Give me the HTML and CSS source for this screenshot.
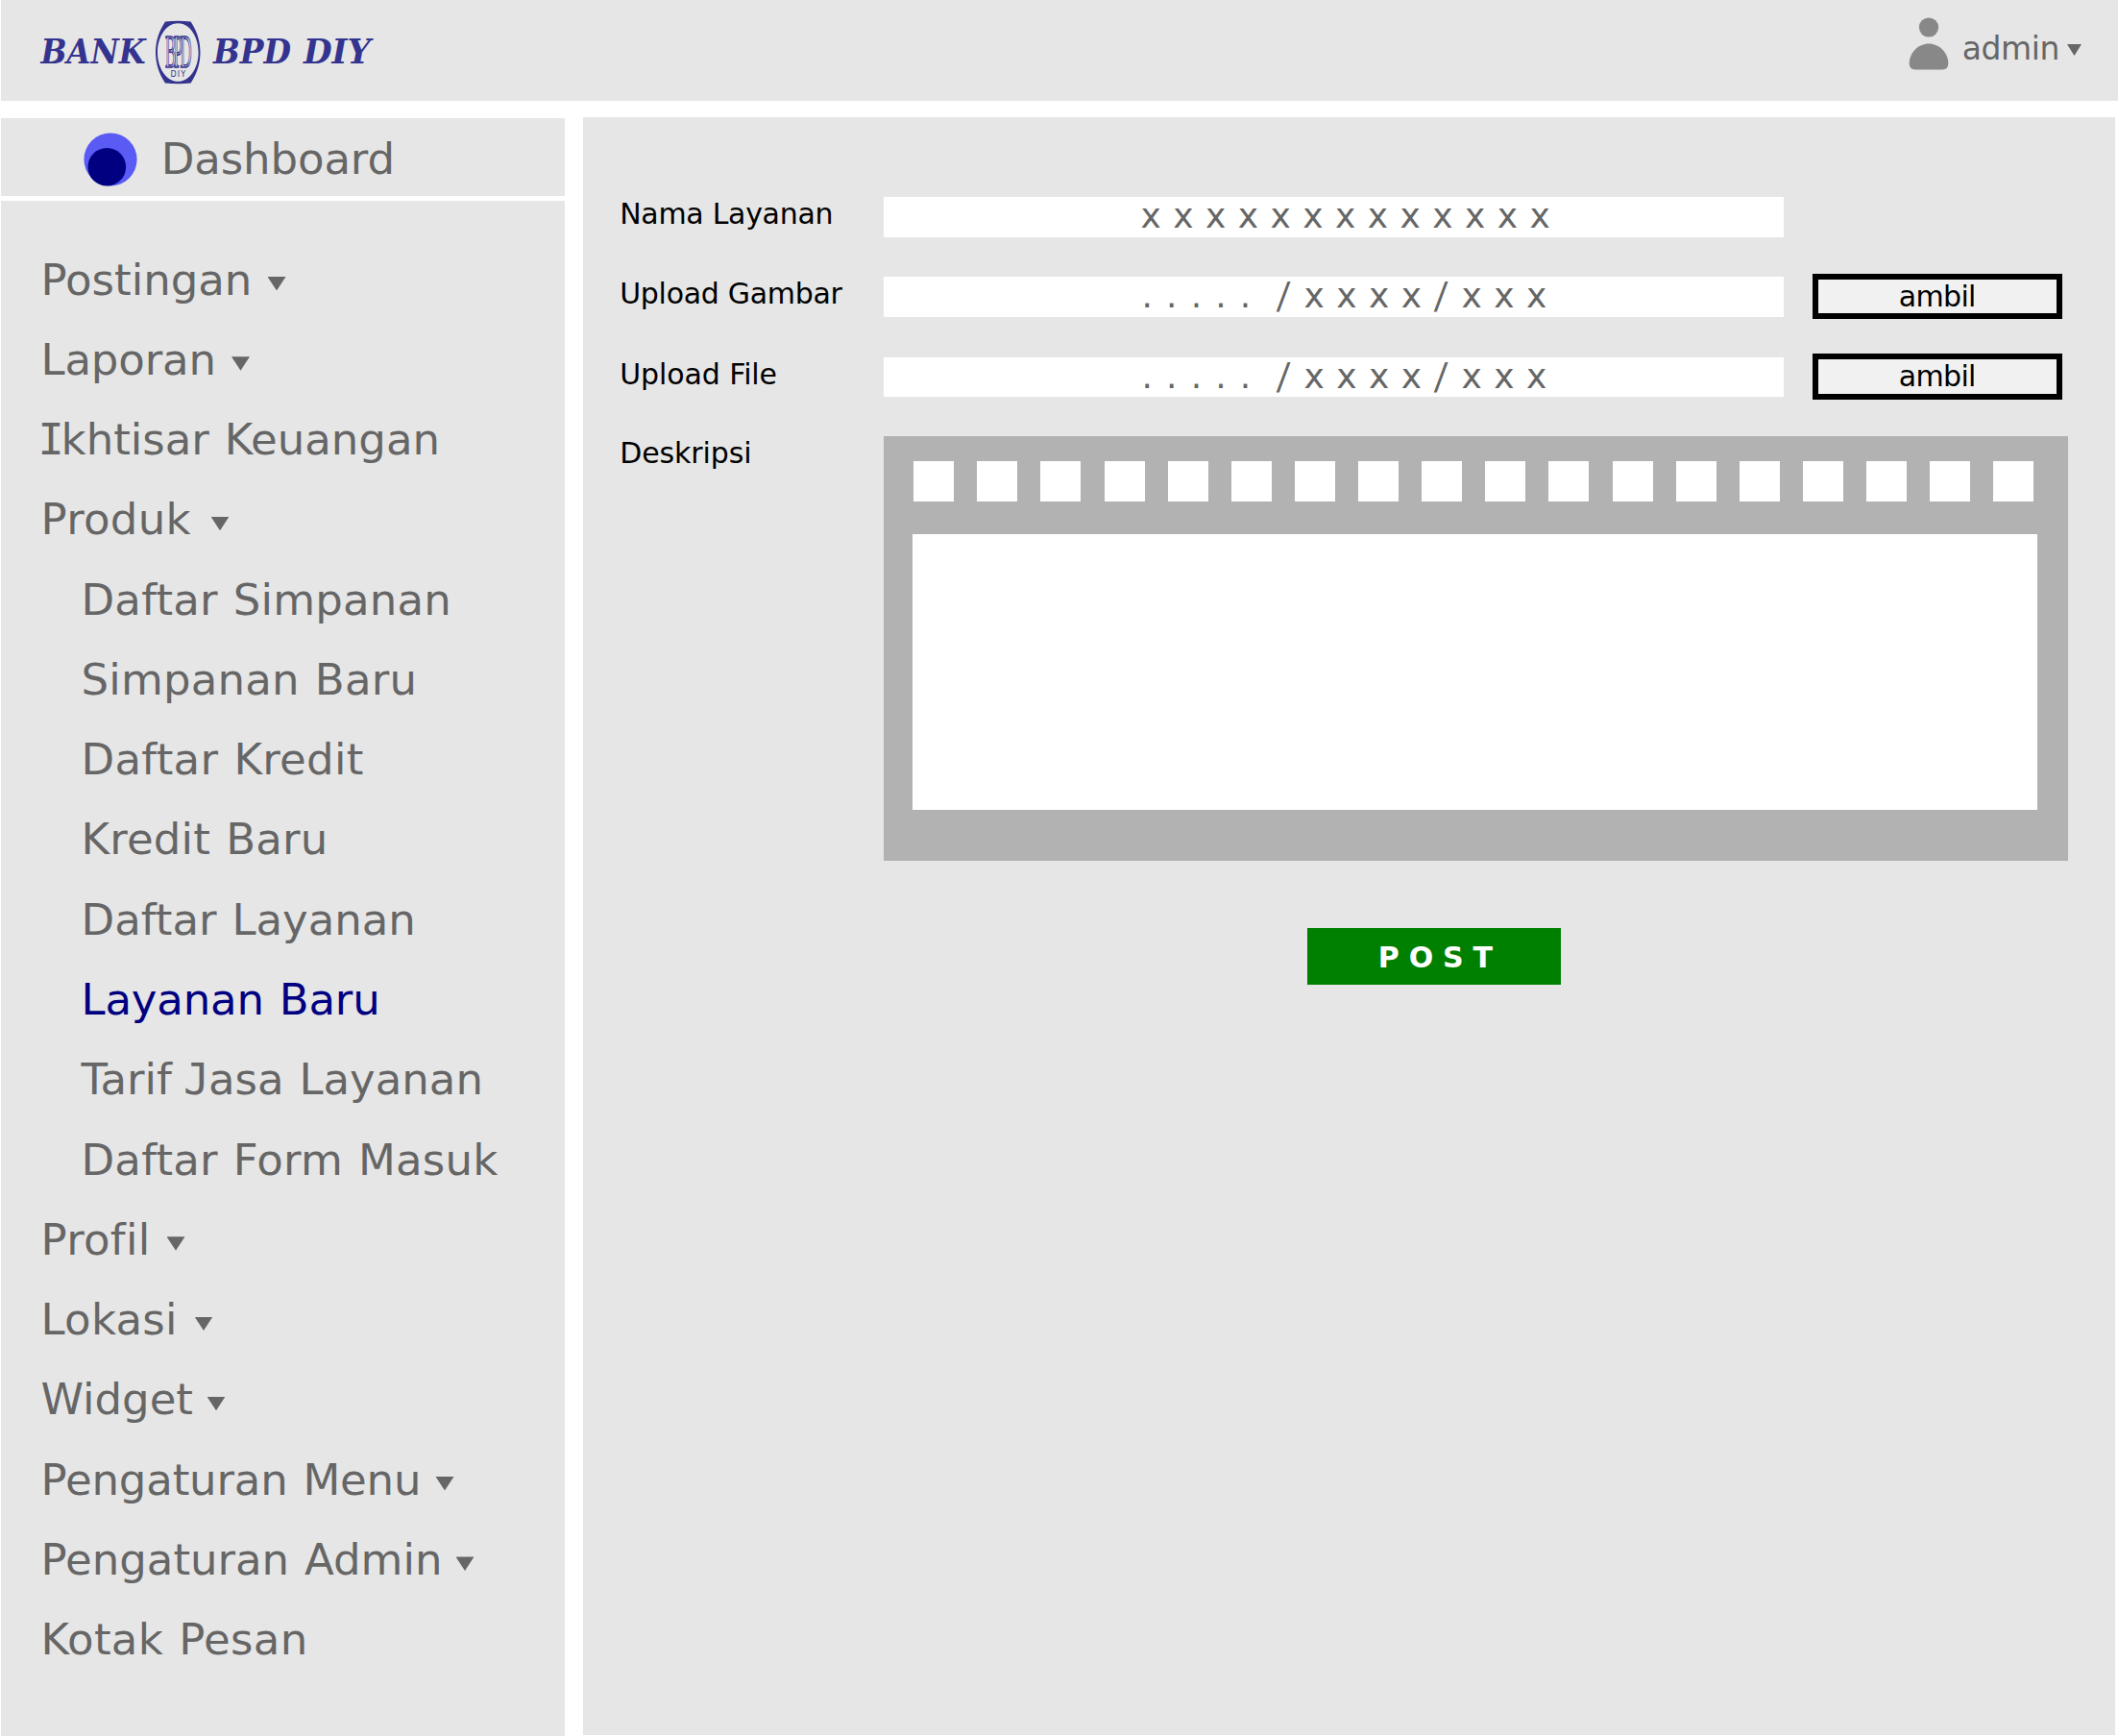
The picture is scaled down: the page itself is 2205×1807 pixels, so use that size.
FILE: index.html
```html
<!DOCTYPE html>
<html lang="id">
<head>
<meta charset="utf-8">
<title>Layanan Baru - Bank BPD DIY</title>
<link rel="stylesheet" href="styles.css">
</head>
<body>
<header class="topbar">
  <svg class="logo" width="350" height="70" viewBox="40 20 350 70" role="img" aria-label="Bank BPD DIY">
    <g class="logo-word">
      <text x="42.500" y="65.500" textLength="109" lengthAdjust="spacingAndGlyphs">BANK</text>
      <text x="222" y="65.500" textLength="81" lengthAdjust="spacingAndGlyphs">BPD</text>
      <text x="316" y="65.500" textLength="70" lengthAdjust="spacingAndGlyphs">DIY</text>
    </g>
    <path class="logo-ring" fill-rule="evenodd" d="M172 22.500Q185.300 21 198.600 22.500C205 32 208.500 43 208.500 54.500S205 77 198.600 86.500Q185.300 88 172 86.500C165.500 77 162 66 162 54.500S165.500 32 172 22.500ZM185.300 24.200C173.500 24.200 164 37.500 164 54.500S173.500 84.800 185.300 84.800S206.600 71.500 206.600 54.500S197.100 24.200 185.300 24.200Z"/>
    <text class="logo-mono" transform="translate(172 70) scale(.34 1)">BPD</text>
    <text class="logo-sub" x="177.600" y="79.800" textLength="15.500">DIY</text>
  </svg>
  <div class="account">
    <svg class="avatar" width="42" height="56" viewBox="0 0 42 56">
      <circle cx="21" cy="10.500" r="10.100"/>
      <path d="M21 27.500C32 27.500 41.300 37 41.300 48Q41.300 54.500 35 54.500H7Q.7 54.500 .7 48C.7 37 10 27.500 21 27.500Z"/>
    </svg>
    <span class="account-name">admin</span>
    <i class="caret caret-small"></i>
  </div>
</header>

<div class="layout">
  <aside class="sidebar">
    <div class="dashboard">
      <svg class="dash-icon" width="56" height="56" viewBox="0 0 56 56">
        <circle cx="28" cy="28" r="27.600" fill="#5a5af5"/>
        <circle cx="24.300" cy="35.800" r="19.800" fill="#000080"/>
      </svg>
      <span>Dashboard</span>
    </div>
    <nav class="menu">
      <a class="item"><span class="w-postingan">Postingan</span><i class="caret"></i></a>
      <a class="item tight"><span class="w-laporan">Laporan</span><i class="caret"></i></a>
      <a class="item"><span><span class="slab-i">I</span>khtisar Keuangan</span></a>
      <a class="item wide"><span class="w-produk">Produk</span><i class="caret"></i></a>
      <a class="item sub loose">Daftar Simpanan</a>
      <a class="item sub loose">Simpanan Baru</a>
      <a class="item sub wide">Daftar Kredit</a>
      <a class="item sub loose">Kredit Baru</a>
      <a class="item sub">Daftar Layanan</a>
      <a class="item sub tight active">Layanan Baru</a>
      <a class="item sub"><span>Tarif <span class="slab-j">J</span>asa Layanan</span></a>
      <a class="item sub loose">Daftar Form Masuk</a>
      <a class="item wide"><span class="w-profil">Profil</span><i class="caret"></i></a>
      <a class="item wide"><span class="w-lokasi">Lokasi</span><i class="caret"></i></a>
      <a class="item"><span class="w-widget">Widget</span><i class="caret"></i></a>
      <a class="item tight"><span class="w-menu">Pengaturan Menu</span><i class="caret"></i></a>
      <a class="item"><span class="w-admin">Pengaturan Admin</span><i class="caret"></i></a>
      <a class="item wide">Kotak Pesan</a>
    </nav>
  </aside>

  <main class="panel">
    <div class="row">
      <span class="label tight-label">Nama Layanan</span>
      <div class="field">x x x x x x x x x x x x x</div>
    </div>
    <div class="row">
      <span class="label tight-label">Upload Gambar</span>
      <div class="field"><span class="dots">. . . . .</span><span class="slash">/</span><span class="dir">x x x x</span><span class="slash">/</span><span>x x x</span></div>
      <button class="pick">ambil</button>
    </div>
    <div class="row">
      <span class="label">Upload File</span>
      <div class="field"><span class="dots">. . . . .</span><span class="slash">/</span><span class="dir">x x x x</span><span class="slash">/</span><span>x x x</span></div>
      <button class="pick">ambil</button>
    </div>
    <div class="row last">
      <span class="label">Deskripsi</span>
      <div class="editor">
        <div class="tools"><i></i><i></i><i></i><i></i><i></i><i></i><i></i><i></i><i></i><i></i><i></i><i></i><i></i><i></i><i></i><i></i><i></i><i></i></div>
        <div class="text-area"></div>
      </div>
    </div>
    <button class="post">P O S T</button>
  </main>
</div>
</body>
</html>
```
FILE: styles.css
```css
* { box-sizing: border-box; }

body {
  margin: 0;
  height: 1807px;
  overflow: hidden;
  background: #fff;
  color: #666;
  font-family: Verdana, "DejaVu Sans", sans-serif;
}

button { font-family: inherit; padding: 0; }

.topbar {
  display: flex;
  justify-content: space-between;
  height: 105px;
  margin-left: 1px;
  padding: 0 38px 0 39px;
  background: #e6e6e6;
}

.logo { margin-top: 20px; }
.logo-word { font: italic bold 35px "DejaVu Serif", serif; fill: #34348f; }
.logo-ring { fill: #34348f; }
.logo-mono {
  font: 49px "Liberation Serif", serif;
  letter-spacing: -7px;
  fill: none;
  stroke: #34348f;
  stroke-width: 1.2px;
  vector-effect: non-scaling-stroke;
}
.logo-sub { font: 8px "DejaVu Sans", sans-serif; fill: #34348f; }

.account { display: flex; align-items: flex-start; }
.avatar { margin-top: 17.500px; fill: #888; }
.account-name { margin: 0 7.900px 0 14px; font-size: 33px; line-height: 101px; letter-spacing: -.4px; }

.caret {
  flex: none;
  width: 19px;
  height: 14.500px;
  margin-top: 8px;
  background: #666;
  clip-path: polygon(0 0, 100% 0, 50% 100%);
}
.caret-small { width: 15px; height: 12px; margin-top: 46px; }

.layout { display: flex; justify-content: space-between; padding: 17px 3.400px 0 1px; }

.sidebar { width: 587px; padding-top: 1px; }
.dashboard {
  display: flex;
  align-items: flex-start;
  height: 80.500px;
  padding-left: 85.500px;
  background: #e6e6e6;
  font-size: 45px;
  line-height: 86px;
  letter-spacing: -.1px;
}
.dash-icon { margin: 14.500px 25.200px 0 0; }

.menu { height: 1598px; margin-top: 5.500px; padding: 40.500px 0 0 41.500px; background: #e6e6e6; }
.item {
  display: flex;
  align-items: center;
  height: 83.290px;
  font-size: 45px;
  line-height: 83.290px;
  word-spacing: 1.600px;
  white-space: pre;
}
.tight { letter-spacing: -.15px; }
.loose { letter-spacing: .2px; }
.wide { letter-spacing: .3px; }
.sub { padding-left: 42px; }
.active { color: #000080; }
.slab-i, .slab-j { font-family: "DejaVu Sans Mono", monospace; }
.slab-i { margin: 0 -3px; }
.slab-j { margin: 0 -1px 0 -4px; }

/* Label widths set where each caret stands */
.w-postingan { width: 236px; }
.w-laporan { width: 198.500px; }
.w-produk { width: 177px; }
.w-profil { width: 131px; }
.w-lokasi { width: 160px; }
.w-widget { width: 173px; }
.w-menu { width: 411px; }
.w-admin { width: 432px; }

.panel { width: 1594.600px; height: 1683.500px; padding: 83px 0 0 38.200px; background: #e6e6e6; }
.row { display: flex; align-items: flex-start; height: 83.300px; }
.last { margin-top: -.6px; }
.label { width: 274.800px; font-size: 30px; line-height: 36px; color: #000; letter-spacing: -.1px; }
.tight-label { letter-spacing: -.3px; }
.field {
  display: flex;
  width: 937px;
  height: 41.500px;
  padding-left: 267.500px;
  background: #fff;
  font-size: 36px;
  line-height: 39px;
  word-spacing: 1px;
  white-space: pre;
}
.dots { width: 140px; padding-left: 1px; letter-spacing: .85px; }
.slash { width: 30px; transform: translateX(2px) scaleY(1.07) skewX(-5deg); }
.dir { width: 134px; }

.pick {
  width: 260.500px;
  height: 47.500px;
  margin: -3.500px 0 0 29.500px;
  border: 6px solid #000;
  background: #f1f1f1;
  color: #000;
  font-size: 30px;
  line-height: 34px;
  letter-spacing: -.7px;
}

.editor { width: 1233px; height: 441.500px; padding: 26px 32.500px 0 30px; background: #b2b2b2; }
.tools { display: flex; justify-content: space-between; padding: 0 3.200px 0 1.200px; }
.tools i { width: 42px; height: 42px; background: #fff; }
.text-area { height: 287.300px; margin-top: 33.700px; background: #fff; }

.post {
  display: block;
  width: 264px;
  height: 58.500px;
  margin: 428.600px 0 0 716px;
  border: 0;
  background: #008000;
  color: #fff;
  font-size: 30px;
  font-weight: bold;
  line-height: 62px;
  letter-spacing: -.3px;
  text-indent: 2px;
}
```
